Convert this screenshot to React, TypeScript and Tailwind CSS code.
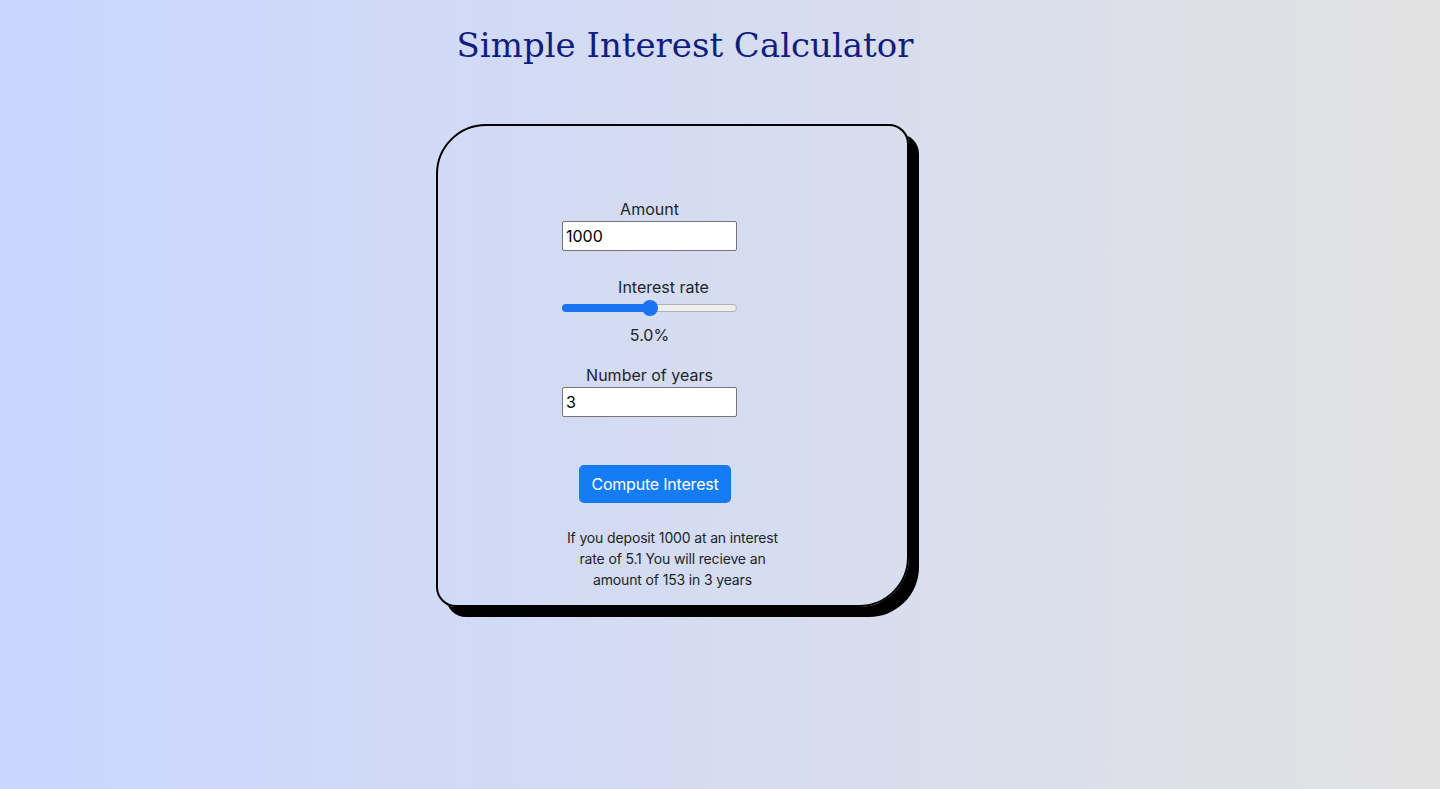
import React from 'react';

const Field = ({ label, value }: { label: string; value: string }) => (
  <div className="flex flex-col items-center w-[175px]">
    <label className="text-base leading-6 text-[#212529]">{label}</label>
    <input
      readOnly
      value={value}
      className="w-[175px] h-[30px] bg-white border border-[#767676] rounded-[2px] px-[3px] text-base text-black outline-none"
    />
  </div>
);

const App = () => {
  return (
    <div
      className="min-h-screen w-full bg-gradient-to-r from-[#c9d6ff] to-[#e2e2e2] pt-[21px]"
      style={{ fontFamily: 'Inter, "Noto Sans", Arial, sans-serif' }}
    >
      <h1
        className="ml-[436px] w-[498px] whitespace-nowrap text-center text-[34px] leading-[48px] text-[#111e80]"
        style={{ fontFamily: '"DejaVu Serif", "Liberation Serif", serif' }}
      >
        Simple Interest Calculator
      </h1>

      {/* Card */}
      <div className="ml-[436px] mt-[55px] w-[473px] h-[483px] border-2 border-black rounded-tl-[50px] rounded-tr-[20px] rounded-br-[50px] rounded-bl-[20px] shadow-[10px_10px_0_0_#000] pt-[71px]">
        <div className="ml-[124px] w-[175px] flex flex-col items-center">
          <Field label="Amount" value="1000" />

          <div className="mt-[24px] flex flex-col items-center w-[175px]">
            <span className="pl-[28px] text-base leading-6 text-[#212529]">Interest rate</span>
            <div className="relative w-[175px] h-[16px] mt-[1px] flex items-center">
              <div className="w-full h-[8px] rounded-full bg-[#efefef] border border-[#b2b2b2]" />
              <div className="absolute left-0 top-[4px] h-[8px] w-[88px] rounded-full bg-[#1a73f0]" />
              <div className="absolute left-[80px] top-0 w-[16px] h-[16px] rounded-full bg-[#1a73f0]" />
            </div>
            <span className="mt-[7px] text-base leading-6 text-[#212529]">5.0%</span>
          </div>

          <div className="mt-[16px]">
            <Field label="Number of years" value="3" />
          </div>
        </div>

        <div className="ml-[141px] mt-[48px]">
          <button className="w-[152px] h-[38px] rounded-[5px] bg-[#157cf6] text-white text-base tracking-[-0.2px]">
            Compute Interest
          </button>
        </div>

        <p className="mx-auto mt-[24px] w-[230px] text-center text-sm leading-[21px] tracking-[-0.15px] text-[#212529]">
          If you deposit 1000 at an interest rate of 5.1 You will recieve an amount of 153 in 3 years
        </p>
      </div>
    </div>
  );
};

export default App;
